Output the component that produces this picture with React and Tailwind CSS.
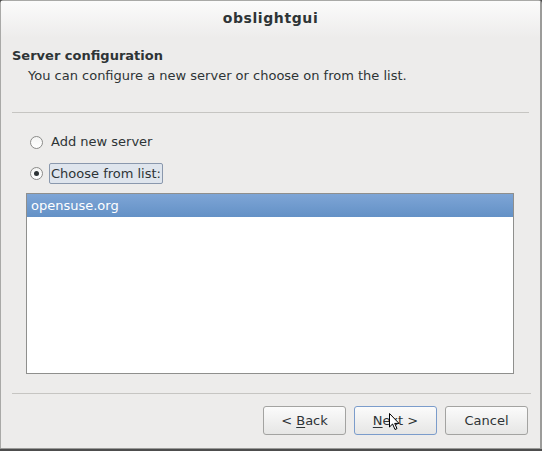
import React, { useState } from 'react'

const font = { fontFamily: '"DejaVu Sans", sans-serif' }

const Radio = ({ checked }) => (
  <span className="flex h-[13px] w-[13px] items-center justify-center rounded-full border border-[#8b8b89] bg-gradient-to-b from-[#f4f4f3] to-white">
    {checked && <span className="h-[5px] w-[5px] rounded-full bg-[#2e3436]" />}
  </span>
)

const Button = ({ children, focused }) => (
  <button
    className={
      'flex h-[29px] w-[83px] items-center justify-center rounded-[3px] border bg-gradient-to-b from-[#fbfbfb] to-[#e6e6e5] text-[13px] text-[#2e3436] ' +
      (focused ? 'border-[#7b9ccb]' : 'border-[#a3a3a1]')
    }
  >
    {children}
  </button>
)

const Cursor = () => (
  <svg className="pointer-events-none absolute left-[389px] top-[413px]" width="12" height="18" viewBox="0 0 12 18">
    <path d="M0.5 0.5 L0.5 14 L3.6 11 L6 16.5 L8 15.6 L5.7 10.4 L10 10.4 Z" fill="#fff" stroke="#000" strokeWidth="1" strokeLinejoin="round" />
  </svg>
)

export default function App() {
  const [choice, setChoice] = useState('list')

  return (
    <div style={font} className="relative flex h-[451px] w-[542px] flex-col overflow-hidden bg-[#4d4d4d]">
      <div className="flex flex-1 flex-col border-t border-l border-r-2 border-[#a9a9a7] border-r-[#9c9c9a] bg-[#edeceb] rounded-tl-[4px] rounded-tr-[4px]">
        {/* title bar */}
        <div className="flex h-[37px] items-center justify-center bg-gradient-to-b from-[#fbfbfb] to-[#edeceb] pb-[2px] text-[14px] font-bold tracking-[0.6px] text-[#2e3436]">
          obslightgui
        </div>

        <div className="flex flex-1 flex-col px-[11px] text-[13px] text-[#2e3436]">
          <div className="mt-[10px] font-bold leading-4">Server configuration</div>
          <div className="mt-[4px] pl-[16px] leading-4">You can configure a new server or choose on from the list.</div>

          <div className="mt-[28px] h-px bg-[#c6c5c2]" />

          <div className="mt-[21px] flex items-center gap-[8px] pl-[18px] leading-4" onClick={() => setChoice('new')}>
            <Radio checked={choice === 'new'} />
            <span>Add new server</span>
          </div>

          <div className="mt-[13px] flex items-center gap-[6px] pl-[18px]" onClick={() => setChoice('list')}>
            <Radio checked={choice === 'list'} />
            <span className="rounded-[2px] border border-[#8a98ad] bg-[#dfe5ed] px-[1px] leading-[19px]">Choose from list:</span>
          </div>

          <div className="ml-[14px] mr-[15px] mt-[9px] h-[181px] border border-[#8f8f8d] bg-white">
            <div className="flex h-[23px] items-center bg-gradient-to-b from-[#7ea5d6] to-[#6391c6] pl-[4px] text-white">
              opensuse.org
            </div>
          </div>

          <div className="mt-[19px] mr-[-2px] h-px bg-[#c6c5c2]" />

          <div className="mt-[12px] flex justify-end gap-[8px] pr-[1px]">
            <Button>
              &lt;&nbsp;<span className="underline underline-offset-2">B</span>ack
            </Button>
            <Button focused>
              <span className="underline underline-offset-2">N</span>ext &gt;
            </Button>
            <Button>Cancel</Button>
          </div>
        </div>
      </div>
      <div className="h-[3px] border-t border-[#9a9a98] bg-[#4d4d4d]" />
      <Cursor />
    </div>
  )
}
